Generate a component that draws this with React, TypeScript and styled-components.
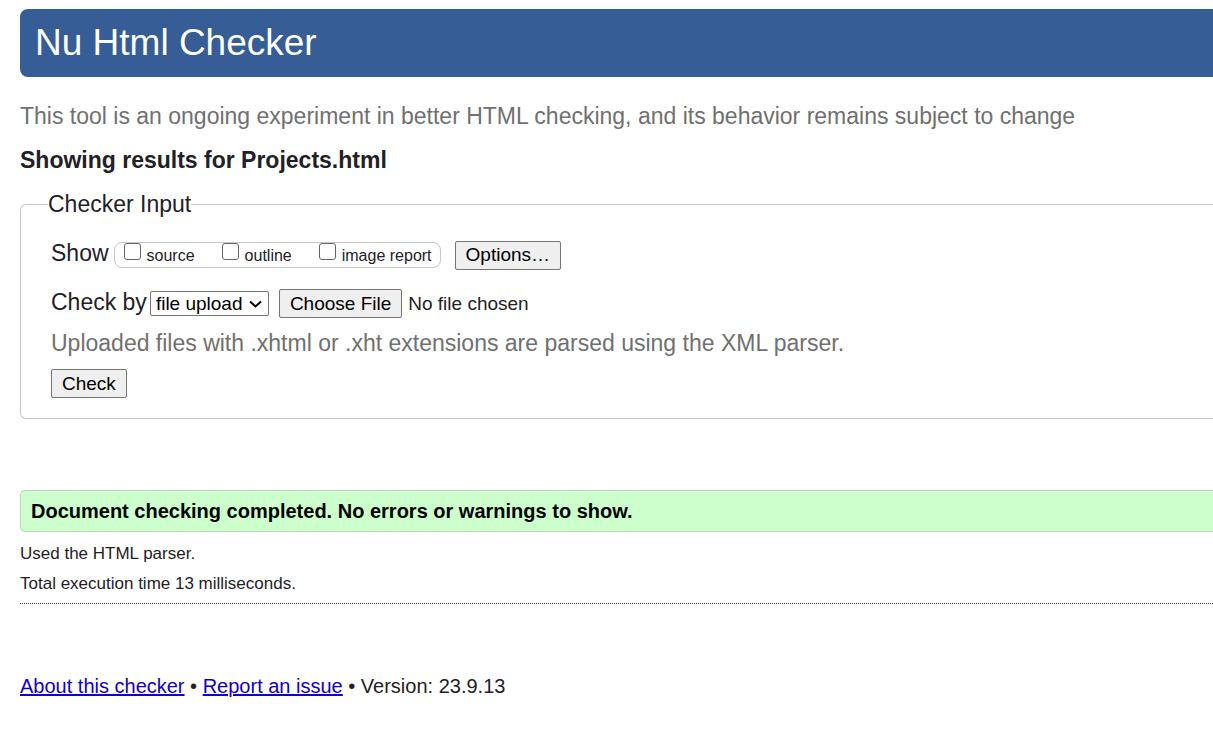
import React from "react";
import styled, { createGlobalStyle } from "styled-components";

const GlobalStyle = createGlobalStyle`
  *, *::before, *::after { box-sizing: border-box; }
  body {
    margin: 0;
    background: #fff;
    color: #1f2126;
    font-family: Arial, "Liberation Sans", sans-serif;
    font-size: 23px;
    line-height: 28px;
  }
`;

const Page = styled.div`
  padding: 9px 0 32px 20px;
`;

const Banner = styled.header`
  padding: 13px 15px;
  border-radius: 8px 0 0 8px;
  background: #365d95;
`;

const Title = styled.h1`
  margin: 0;
  color: #fff;
  font-size: 37px;
  font-weight: 400;
  line-height: 42px;
`;

const Hint = styled.p<{ $top: number }>`
  margin: ${(p) => p.$top}px 0 0;
  color: #707070;
`;

const ResultsHeading = styled.h2`
  margin: 16px 0;
  font-size: 23px;
  font-weight: 700;
`;

const InputPanel = styled.fieldset`
  min-width: 0;
  margin: 0;
  padding: 0 0 20px 27px;
  border: 1px solid #c8c8c8;
  border-right: 0;
  border-radius: 6px 0 0 6px;
`;

const PanelTitle = styled.legend`
  padding: 0;
`;

const PanelBody = styled.div`
  padding: 21px 0 0 3px;
`;

const Row = styled.div`
  display: flex;
  align-items: center;
`;

const SourceRow = styled(Row)`
  margin-top: 17px;
`;

const RowLabel = styled.span`
  padding-bottom: 4px;
`;

const SelectLabel = styled.label`
  padding-bottom: 3px;
`;

const OptionGroup = styled.div`
  display: flex;
  gap: 27px;
  height: 26px;
  margin: 0 14px 0 5px;
  padding: 0 8px 0 9px;
  border: 1px solid #c8c8c8;
  border-radius: 8px;
`;

const Option = styled.label`
  display: flex;
  align-items: flex-start;
  gap: 6px;
  font-size: 16px;
  line-height: 26px;
`;

const Checkbox = styled.input`
  appearance: none;
  width: 17px;
  height: 17px;
  margin: 0;
  border: 1px solid #666;
  border-radius: 3px;
  background: #fff;

  &:checked {
    background: #0075ff;
  }
`;

const Button = styled.button`
  height: 29px;
  padding: 0 10px;
  border: 1px solid #767676;
  border-radius: 2px;
  background: #efefef;
  color: #000;
  font: 19px/26px Arial, "Liberation Sans", sans-serif;
`;

const SelectBox = styled.div`
  display: grid;
  align-items: center;
  margin: 0 10px 0 3px;
`;

const MethodSelect = styled.select`
  grid-area: 1 / 1;
  appearance: none;
  height: 25px;
  padding: 0 25px 0 5px;
  border: 1px solid #767676;
  border-radius: 2px;
  background: #fff;
  color: #000;
  font: 19px Arial, "Liberation Sans", sans-serif;
`;

const Chevron = styled.svg`
  grid-area: 1 / 1;
  justify-self: end;
  width: 13px;
  height: 8px;
  margin-right: 7px;
  pointer-events: none;
`;

const FileInput = styled.input`
  height: 29px;
  color: #1f2126;
  font: 19px/27px Arial, "Liberation Sans", sans-serif;

  &::file-selector-button {
    height: 29px;
    margin: 0 6px 0 0;
    padding: 0 10px;
    border: 1px solid #767676;
    border-radius: 2px;
    background: #efefef;
    color: #000;
    font: inherit;
  }
`;

const SubmitRow = styled(Row)`
  margin-top: 12px;
`;

const Success = styled.p`
  margin: 71px 0 0;
  padding: 6px 10px;
  border: 1px solid #bbd4bb;
  border-right: 0;
  border-radius: 5px 0 0 5px;
  background: #ccffcc;
  color: #000;
  font-size: 20px;
  font-weight: 700;
`;

const Details = styled.div`
  padding: 12px 0 9px;
  border-bottom: 1px dotted #444;
  font-size: 17px;
  line-height: 20px;
`;

const Detail = styled.p`
  margin: 0;

  & + & {
    margin-top: 10px;
  }
`;

const Footer = styled.footer`
  margin-top: 68px;
  font-size: 20px;
`;

const FooterLink = styled.a`
  color: #1100cc;
`;

const shownParts = ["source", "outline", "image report"];

export default function App() {
  return (
    <>
      <GlobalStyle />
      <Page>
        <Banner>
          <Title>Nu Html Checker</Title>
        </Banner>
        <main>
          <Hint $top={25}>
            This tool is an ongoing experiment in better HTML checking, and its behavior remains
            subject to change
          </Hint>
          <ResultsHeading>Showing results for Projects.html</ResultsHeading>
          <form onSubmit={(e) => e.preventDefault()}>
            <InputPanel>
              <PanelTitle>Checker Input</PanelTitle>
              <PanelBody>
                <Row>
                  <RowLabel id="show-label">Show</RowLabel>
                  <OptionGroup role="group" aria-labelledby="show-label">
                    {shownParts.map((part) => (
                      <Option key={part}>
                        <Checkbox type="checkbox" name={part} />
                        {part}
                      </Option>
                    ))}
                  </OptionGroup>
                  <Button type="button">Options…</Button>
                </Row>
                <SourceRow>
                  <SelectLabel htmlFor="method">Check by</SelectLabel>
                  <SelectBox>
                    <MethodSelect id="method" defaultValue="file">
                      <option value="file">file upload</option>
                    </MethodSelect>
                    <Chevron viewBox="0 0 13 8" aria-hidden="true">
                      <path d="M1 1.5 L6.5 6.5 L12 1.5" fill="none" stroke="#000" strokeWidth="2" />
                    </Chevron>
                  </SelectBox>
                  <FileInput type="file" aria-label="File to check" />
                </SourceRow>
                <Hint $top={10}>
                  Uploaded files with .xhtml or .xht extensions are parsed using the XML parser.
                </Hint>
                <SubmitRow>
                  <Button type="submit">Check</Button>
                </SubmitRow>
              </PanelBody>
            </InputPanel>
          </form>
          <Success>Document checking completed. No errors or warnings to show.</Success>
          <Details>
            <Detail>Used the HTML parser.</Detail>
            <Detail>Total execution time 13 milliseconds.</Detail>
          </Details>
        </main>
        <Footer>
          <FooterLink href="#about">About this checker</FooterLink> •{" "}
          <FooterLink href="#issues">Report an issue</FooterLink> • Version: 23.9.13
        </Footer>
      </Page>
    </>
  );
}
